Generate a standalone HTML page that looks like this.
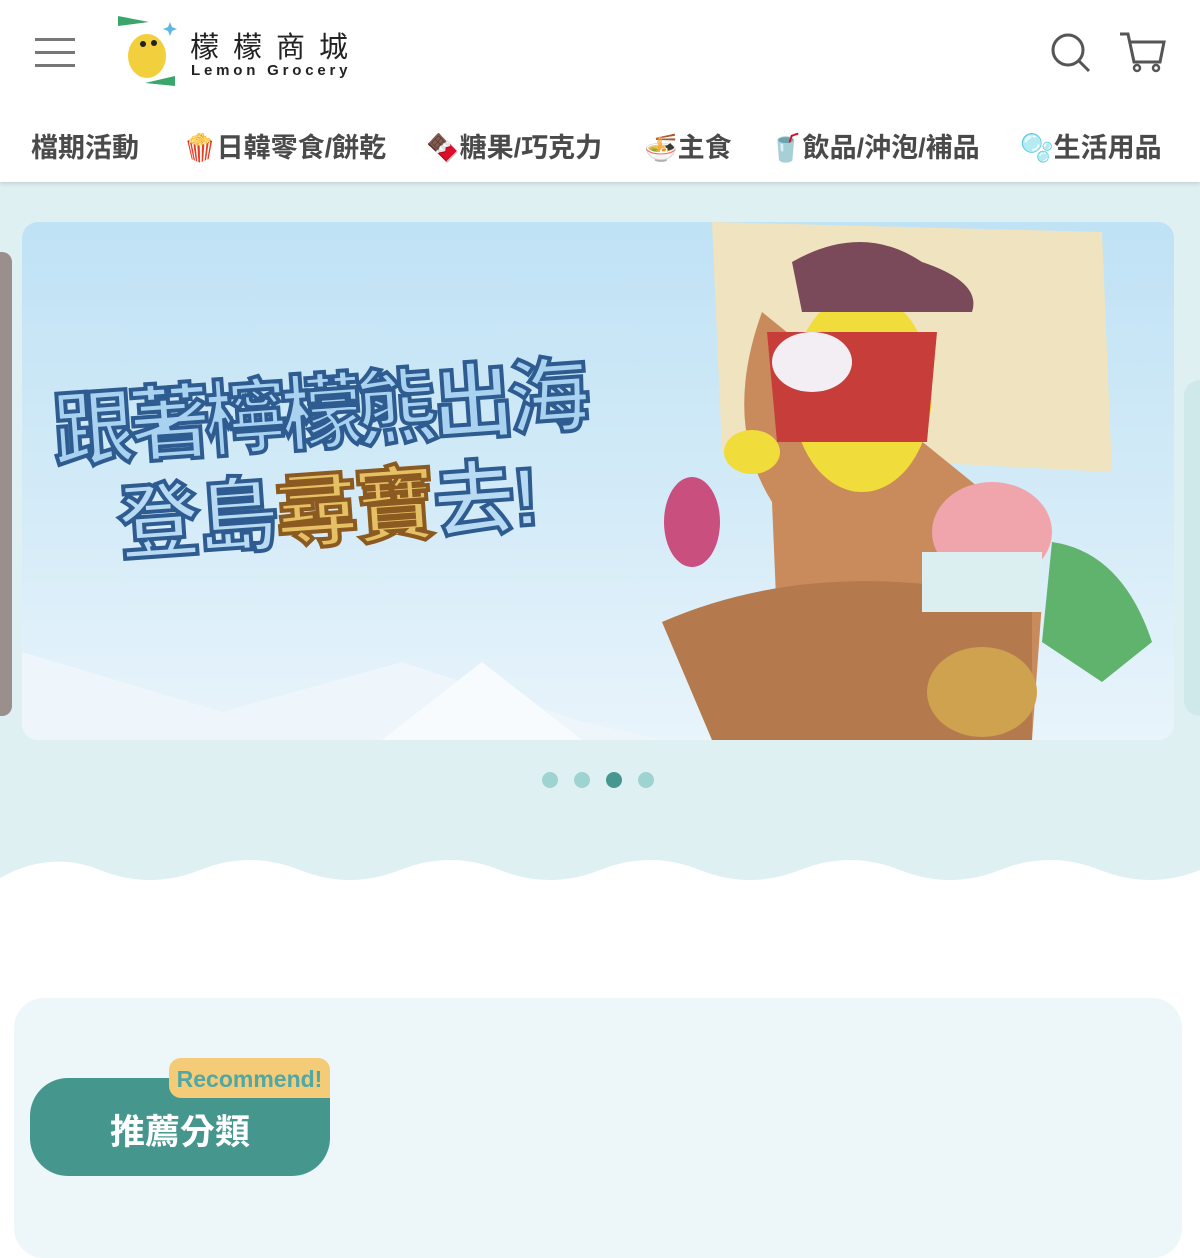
<!DOCTYPE html>
<html><head><meta charset="utf-8"><style>
*{margin:0;padding:0;box-sizing:border-box}
body{width:1200px;height:1200px;overflow:hidden;background:#fff;font-family:"Liberation Sans","Noto Sans CJK TC",sans-serif;position:relative}
.hdr{position:absolute;left:0;top:0;width:1200px;height:182px;background:#fff;box-shadow:0 2px 4px rgba(0,0,0,.12);z-index:2}
.nav{position:absolute;top:126px;font-size:27px;font-weight:bold;color:#4a4a4a;white-space:nowrap}
.sec{position:absolute;left:0;top:182px;width:1200px;height:700px;background:#dff0f2}
.banner{position:absolute;left:22px;top:222px;width:1152px;height:518px;border-radius:16px;overflow:hidden;background:linear-gradient(180deg,#bfe2f5 0%,#d6ecf8 60%,#e9f4fb 100%)}
.dot{position:absolute;top:772px;width:16px;height:16px;border-radius:50%;background:#9ed3d2}
.card{position:absolute;left:14px;top:998px;width:1168px;height:260px;border-radius:30px;background:#edf6f8}
</style></head><body>
<div class="hdr">
 <div style="position:absolute;left:35px;top:38px;width:40px;height:3px;background:#777"></div>
 <div style="position:absolute;left:35px;top:51px;width:40px;height:3px;background:#777"></div>
 <div style="position:absolute;left:35px;top:64px;width:40px;height:3px;background:#777"></div>
 <svg style="position:absolute;left:115px;top:14px" width="65" height="75"><polygon points="3,2 34,8 3,12" fill="#3aa66b"/><polygon points="30,69 60,62 60,72" fill="#3aa66b"/><ellipse cx="32" cy="42" rx="19" ry="22" fill="#f2cf3c"/><circle cx="28" cy="30" r="3" fill="#222"/><circle cx="39" cy="29" r="3" fill="#222"/><path d="M55 8 l2 5 5 2 -5 2 -2 5 -2 -5 -5 -2 5 -2z" fill="#5cb8e4"/></svg>
 <div style="position:absolute;left:190px;top:24px;font-size:29px;letter-spacing:14px;color:#222">檬檬商城</div>
 <div style="position:absolute;left:191px;top:62px;font-size:15px;letter-spacing:3.8px;color:#222;font-weight:bold">Lemon Grocery</div>
 <svg style="position:absolute;left:1050px;top:32px" width="42" height="42"><circle cx="18" cy="18" r="15" fill="none" stroke="#555" stroke-width="3"/><line x1="29" y1="29" x2="39" y2="39" stroke="#555" stroke-width="3"/></svg>
 <svg style="position:absolute;left:1118px;top:30px" width="48" height="44"><path d="M2 4h8l6 28h26l4-20H13" fill="none" stroke="#555" stroke-width="3"/><circle cx="19" cy="38" r="3" fill="none" stroke="#555" stroke-width="2.5"/><circle cx="38" cy="38" r="3" fill="none" stroke="#555" stroke-width="2.5"/></svg>
 <div class="nav" style="left:31px">檔期活動</div>
 <div class="nav" style="left:183px">🍿日韓零食/餅乾</div>
 <div class="nav" style="left:426px">🍫糖果/巧克力</div>
 <div class="nav" style="left:644px">🍜主食</div>
 <div class="nav" style="left:769px">🥤飲品/沖泡/補品</div>
 <div class="nav" style="left:1020px">🫧生活用品</div>
</div>
<div class="sec"></div>
<div style="position:absolute;left:0;top:252px;width:12px;height:464px;border-radius:0 10px 10px 0;background:#9a8f8c"></div>
<div style="position:absolute;left:1184px;top:380px;width:16px;height:336px;border-radius:16px 0 0 16px;background:#cfe8ea"></div>
<div class="banner">
 <svg width="1152" height="518" style="position:absolute;left:0;top:0"><polygon points="0,430 200,490 380,440 560,500 640,518 0,518" fill="#eef6fb"/><polygon points="360,518 460,440 560,518" fill="#f7fbfd"/>
 <path d="M690 0 L1080 10 L1090 250 L700 230z" fill="#efe3c0"/>
 <path d="M740 90 Q700 200 750 280 L760 518 H1010 L1020 380 Q1000 300 950 260z" fill="#c98b5c"/>
 <ellipse cx="840" cy="170" rx="70" ry="100" fill="#f0dc3a"/>
 <path d="M770 40 Q840 0 900 40 Q960 60 950 90 L780 90z" fill="#7a4a5a"/>
 <path d="M745 110 h170 l-10 110 h-150z" fill="#c73d3a"/>
 <ellipse cx="790" cy="140" rx="40" ry="30" fill="#f2eef4"/>
 <path d="M640 400 Q800 330 1010 380 L1010 518 H690z" fill="#b5794e"/>
 <ellipse cx="970" cy="310" rx="60" ry="50" fill="#f0a5ad"/>
 <path d="M900 330 h120 v60 h-120z" fill="#dbeff0"/>
 <ellipse cx="960" cy="470" rx="55" ry="45" fill="#cfa250"/>
 <path d="M1030 320 Q1100 330 1130 420 L1080 460 L1020 420z" fill="#5fb36c"/>
 <ellipse cx="670" cy="300" rx="28" ry="45" fill="#c84f7e"/>
 <ellipse cx="730" cy="230" rx="28" ry="22" fill="#f0dc3a"/>
 </svg>
 <div style="position:absolute;left:30px;top:125px;font-size:82px;font-weight:bold;color:#a9d2f0;-webkit-text-stroke:4px #2e5c90;letter-spacing:-6px;transform:rotate(-4deg);white-space:nowrap">跟著檸檬熊出海</div>
 <div style="position:absolute;left:95px;top:222px;font-size:82px;font-weight:bold;color:#b8daf3;-webkit-text-stroke:4px #2e5c90;letter-spacing:-3px;transform:rotate(-4deg);white-space:nowrap">登島<span style="color:#e6c064;-webkit-text-stroke:4px #8a5a20">尋寶</span>去!</div>
</div>
<div class="dot" style="left:542px"></div><div class="dot" style="left:574px"></div><div class="dot" style="left:606px;background:#469790"></div><div class="dot" style="left:638px"></div>
<svg style="position:absolute;left:0;top:850px" width="1200" height="40"><path d="M0 28 Q50 0 100 20 T200 20 T300 20 T400 20 T500 20 T600 20 T700 20 T800 20 T900 20 T1000 20 T1100 20 T1200 20 V40 H0z" fill="#fff"/></svg>
<div class="card"></div>
<div style="position:absolute;left:30px;top:1078px;width:300px;height:98px;border-radius:38px 0 38px 38px;background:#45968d"></div>
<div style="position:absolute;left:169px;top:1058px;width:161px;height:40px;border-radius:12px 12px 0 12px;background:#f4cb76;color:#4fa7a6;font-weight:bold;font-size:23px;line-height:42px;text-align:center">Recommend!</div>
<div style="position:absolute;left:30px;top:1104px;width:300px;text-align:center;color:#fff;font-size:35px;font-weight:bold">推薦分類</div>
</body></html>
